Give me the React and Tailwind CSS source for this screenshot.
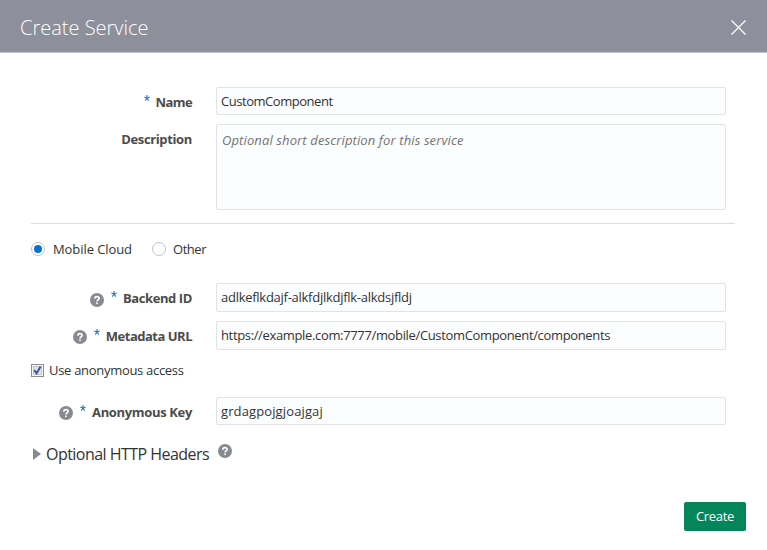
function Help({ className = '' }) {
  return (
    <svg viewBox="0 0 14 14" className={`h-[14px] w-[14px] shrink-0 ${className}`}>
      <circle cx="7" cy="7" r="7" fill="#878b91" />
      <path d="M4.8 5.7C4.8 3 9.2 3.1 9.2 5.3C9.2 6.8 7 6.7 7 8.6" fill="none" stroke="#fff" strokeWidth="1.6" />
      <rect x="6.2" y="9.5" width="1.6" height="1.6" fill="#fff" />
    </svg>
  );
}

function Star({ className = '' }) {
  return (
    <svg viewBox="0 0 6 6" className={`h-[6px] w-[6px] shrink-0 ${className}`}>
      <path d="M3 0V3M0.3 2L3 3L5.7 2M1.3 5.6L3 3L4.7 5.6" fill="none" stroke="#2d74bd" strokeWidth="1.1" />
    </svg>
  );
}

function Field({ label, value, help, helpClass = 'mt-[9px]', required = true, height, labelClass = '', valueClass = '', placeholder = false }) {
  return (
    <div className={`flex items-start ${height}`}>
      <div className="flex h-[30px] w-[192px] shrink-0 items-start justify-end">
        {help && <Help className={helpClass} />}
        {required && <Star className="mt-[8px] mr-[6px] ml-[7px]" />}
        <span className={`mt-[5px] text-[13px] leading-[20px] font-bold whitespace-nowrap text-[#4b4b4b] ${labelClass}`}>{label}</span>
      </div>
      <div className={`ml-6 h-full w-[510px] rounded-[2px] border border-[#dfe4e7] bg-[#fcfdfe] text-[13px] leading-[20px] whitespace-nowrap ${placeholder ? 'pt-[5px] pl-[5px] text-[#737373] italic' : 'pt-[3px] pl-[4px] text-[#333]'}`}>
        <span className={valueClass}>{value}</span>
      </div>
    </div>
  );
}

export default function App() {
  return (
    <div className="flex h-[550px] w-[767px] flex-col overflow-hidden bg-white font-['Open_Sans','Noto_Sans',sans-serif] text-[13px] text-[#333]">
      <header className="flex h-[53px] shrink-0 items-center justify-between border-b border-[#bdc5d2] bg-[#8d8f9b] pr-[21px] pl-5">
        <h1 className="mt-[3px] text-[20px] leading-[28px] font-light text-white">Create Service</h1>
        <svg viewBox="0 0 15 15" className="mt-[2px] h-[15px] w-[15px]">
          <path d="M0.5 0.5L14.5 14.5M14.5 0.5L0.5 14.5" stroke="#fff" strokeWidth="1.3" />
        </svg>
      </header>

      <div className="mt-[34px] flex flex-col gap-[9px]">
        <Field label="Name" value="CustomComponent" height="h-[28px]" labelClass="tracking-[-0.6px]" valueClass="tracking-[-0.46px]" />
        <Field label="Description" value="Optional short description for this service" required={false} placeholder height="h-[86px]" labelClass="tracking-[-0.36px]" valueClass="tracking-[0.12px]" />
      </div>

      <div className="mt-[13px] ml-[31px] h-px w-[704px] shrink-0 bg-[#d5dfe6]" />

      <div className="mt-[15px] ml-[31px] flex h-[20px] shrink-0 items-center">
        <span className="flex h-[14px] w-[14px] items-center justify-center rounded-full border border-[#bcc5cd]">
          <span className="h-[8px] w-[8px] rounded-full bg-[#0572ce]" />
        </span>
        <span className="ml-[8px] w-[99px] leading-[20px] tracking-[-0.08px]">Mobile Cloud</span>
        <span className="h-[14px] w-[14px] rounded-full border border-[#bcc5cd]" />
        <span className="ml-[7px] leading-[20px] tracking-[-0.45px]">Other</span>
      </div>

      <div className="mt-[24px] flex flex-col gap-[9px]">
        <Field label="Backend ID" value="adlkeflkdajf-alkfdjlkdjflk-alkdsjfldj" help helpClass="mt-[10px]" height="h-[29px]" labelClass="tracking-[-0.4px]" valueClass="tracking-[-0.27px]" />
        <Field label="Metadata URL" value="https://example.com:7777/mobile/CustomComponent/components" help height="h-[29px]" labelClass="tracking-[-0.5px]" valueClass="tracking-[-0.35px]" />
      </div>

      <div className="mt-[10px] ml-[31px] flex h-[20px] shrink-0 items-center">
        <svg viewBox="0 0 13 13" className="h-[13px] w-[13px]">
          <rect x="0.5" y="0.5" width="12" height="12" fill="#f4f5f6" stroke="#8e8f8f" />
          <rect x="2.5" y="2.5" width="8" height="8" fill="#dde1e8" stroke="#c3c7cc" />
          <path d="M3.2 6.2L5.6 9.3L9.6 2.4" fill="none" stroke="#3d568f" strokeWidth="1.9" />
        </svg>
        <span className="ml-[5px] leading-[20px] tracking-[-0.3px]">Use anonymous access</span>
      </div>

      <div className="mt-[17px]">
        <Field label="Anonymous Key" value="grdagpojgjoajgaj" help height="h-[28px]" labelClass="tracking-[-0.34px]" valueClass="tracking-[0.12px]" />
      </div>

      <div className="mt-[17px] ml-[33px] flex h-[24px] shrink-0 items-start">
        <svg viewBox="0 0 8 12" className="mt-[6px] h-[12px] w-[8px]">
          <path d="M0 0L8 6L0 12Z" fill="#878b91" />
        </svg>
        <span className="ml-[5px] w-[172px] text-[16px] leading-[24px] tracking-[-0.53px] whitespace-nowrap">Optional HTTP Headers</span>
        <Help className="mt-[2px]" />
      </div>

      <button className="mt-[36px] ml-[684px] h-[29px] w-[62px] shrink-0 rounded-[2px] bg-[#04865a] pb-[1px] text-[13px] leading-[20px] tracking-[-0.3px] text-white">Create</button>
    </div>
  );
}
